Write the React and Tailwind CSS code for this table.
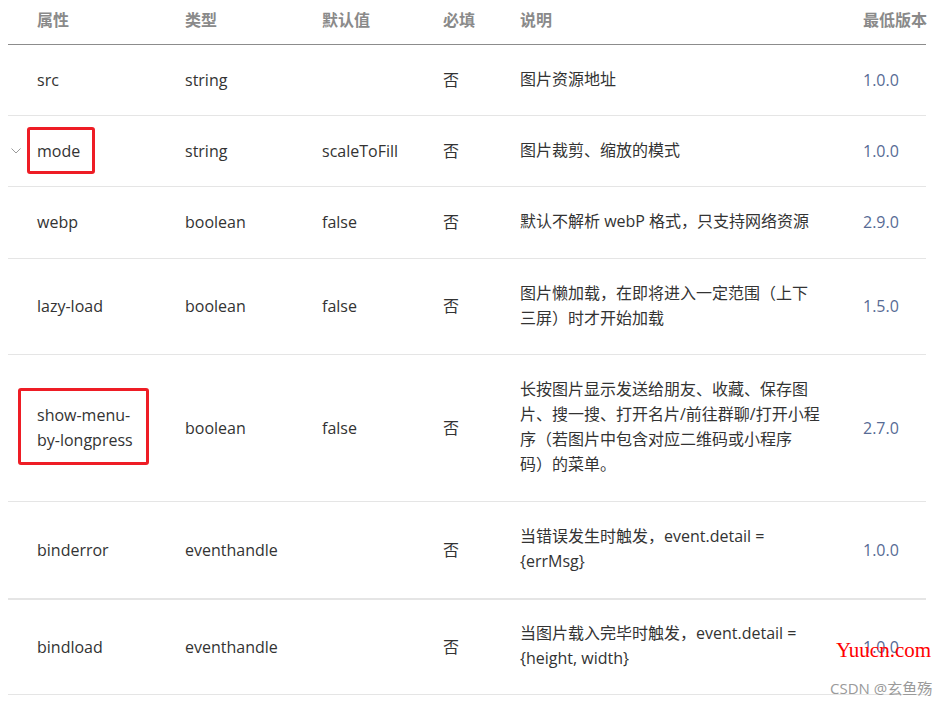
const COLS = 'grid grid-cols-[177px_137px_121px_77px_343px_63px]';

const HEADERS = ['属性', '类型', '默认值', '必填', '说明', '最低版本'];

const ROWS = [
  { name: 'src', type: 'string', def: '', desc: '图片资源地址', ver: '1.0.0', h: 'h-[71px]' },
  { name: 'mode', type: 'string', def: 'scaleToFill', desc: '图片裁剪、缩放的模式', ver: '1.0.0', h: 'h-[71px]', chevron: true, box: 'left-[19px] top-[11px] w-[68px] h-[47px]' },
  { name: 'webp', type: 'boolean', def: 'false', desc: '默认不解析 webP 格式，只支持网络资源', ver: '2.9.0', h: 'h-[72px]' },
  { name: 'lazy-load', type: 'boolean', def: 'false', desc: '图片懒加载，在即将进入一定范围（上下三屏）时才开始加载', ver: '1.5.0', h: 'h-[96px]' },
  { name: 'show-menu-by-longpress', type: 'boolean', def: 'false', desc: '长按图片显示发送给朋友、收藏、保存图片、搜一搜、打开名片/前往群聊/打开小程序（若图片中包含对应二维码或小程序码）的菜单。', ver: '2.7.0', h: 'h-[147px]', box: 'left-[10px] top-[33px] w-[131px] h-[77px]' },
  { name: 'binderror', type: 'eventhandle', def: '', desc: '当错误发生时触发，event.detail = {errMsg}', ver: '1.0.0', h: 'h-[98px]', thick: true },
  { name: 'bindload', type: 'eventhandle', def: '', desc: '当图片载入完毕时触发，event.detail = {height, width}', ver: '1.0.0', h: 'h-[95px]' },
];

function Chevron() {
  return (
    <svg width="10" height="6" viewBox="0 0 10 6" className="absolute left-[3px] top-1/2 -translate-y-1/2">
      <polyline points="0.5,0.5 5,5 9.5,0.5" fill="none" stroke="#9a9a9a" strokeWidth="1" />
    </svg>
  );
}

export default function App() {
  return (
    <div
      className="relative w-[945px] h-[705px] overflow-hidden bg-white text-[16px] leading-[25px] text-[#333] [text-spacing-trim:space-all]"
      style={{ fontFamily: '"Open Sans", "Noto Sans CJK SC", sans-serif' }}
    >
      <div className="ml-[8px] w-[918px]">
        <div className={`${COLS} h-[45px] items-center border-b border-[#8c8c8c] pb-[4px] font-semibold text-[#8a8a8a]`}>
          {HEADERS.map((h, i) => (
            <div key={h} className={`whitespace-nowrap ${i === 0 ? 'pl-[29px]' : ''}`}>
              {h}
            </div>
          ))}
        </div>

        {ROWS.map((r) => (
          <div
            key={r.name}
            className={`${COLS} ${r.h} items-center ${r.thick ? 'border-b-2' : 'border-b'} border-[#e5e5e5]`}
          >
            <div className="relative flex h-full items-center pl-[29px] pr-[36px]">
              {r.chevron && <Chevron />}
              <span>{r.name}</span>
              {r.box && (
                <div className={`absolute ${r.box} rounded-[3px] border-[3px] border-[#ee1d25]`} />
              )}
            </div>
            <div>{r.type}</div>
            <div>{r.def}</div>
            <div>否</div>
            <div className="w-[302px] -mt-[2px]">{r.desc}</div>
            <div className="text-[#576b95]">{r.ver}</div>
          </div>
        ))}
      </div>

      <div
        className="absolute left-[836px] top-[636px] text-[21px] leading-[28px] text-[#ff0000]"
        style={{ fontFamily: '"Liberation Serif", serif' }}
      >
        Yuucn.com
      </div>
      <div className="absolute left-[830px] top-[677px] text-[15px] leading-[22px] text-[#9a9a9a]">
        CSDN @玄鱼殇
      </div>
    </div>
  );
}
